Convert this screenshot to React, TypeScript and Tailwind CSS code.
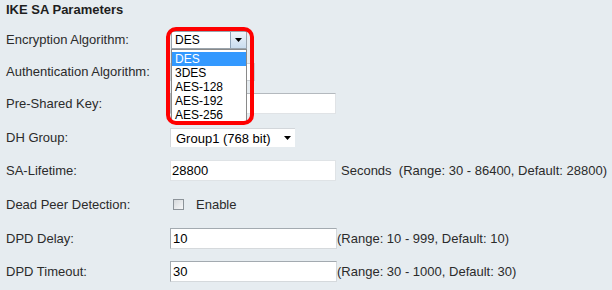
import type { ReactNode } from "react";

const ENC_OPTIONS = ["DES", "3DES", "AES-128", "AES-192", "AES-256"];

function Row({ label, h, children }: { label: string; h: string; children?: ReactNode }) {
  return (
    <div className={`flex items-center ${h}`}>
      <div className="w-[164px] shrink-0 text-[#2b2b2b]">{label}</div>
      <div className="flex items-center">{children}</div>
    </div>
  );
}

function Caret() {
  return (
    <svg width="7" height="4" viewBox="0 0 7 4">
      <path d="M0 0h7L3.5 4z" fill="#000" />
    </svg>
  );
}

export default function App() {
  return (
    <div
      className="w-[612px] h-[290px] overflow-hidden bg-[#e6ecf0] pl-[6px] text-[13px] leading-none"
      style={{ fontFamily: '"Liberation Sans", Arial, sans-serif' }}
    >
      {/* title */}
      <div className="h-[23px] pt-[2px] font-bold text-[#1e1e1e] leading-[16px]">IKE SA Parameters</div>

      <Row label="Encryption Algorithm:" h="h-[33px]">
        <div className="relative ml-[1px] w-[76px] h-[18px] z-10">
          <div className="flex h-full bg-white border border-[#9aa4ad]">
            <span className="flex-1 pl-[3px] text-[12px] leading-[16px] text-black">DES</span>
            <span className="flex w-[16px] items-center justify-center border-l border-[#8ea3b8] bg-gradient-to-b from-[#eef4fa] to-[#c9dcee]">
              <Caret />
            </span>
          </div>
          {/* open list */}
          <div className="absolute left-0 top-[18px] w-[76px] h-[73px] bg-white border border-[#8a8a8a] pt-[2px] text-[12px]">
            {ENC_OPTIONS.map((o, i) => (
              <div
                key={o}
                className={`h-[14px] pl-[3px] leading-[14px] ${i === 0 ? "bg-[#3399ff] text-white" : "text-black"}`}
              >
                {o}
              </div>
            ))}
          </div>
          {/* highlight ring */}
          <div className="absolute left-[-5px] top-[-4px] w-[88px] h-[98px] border-4 border-[#ff0000] rounded-[10px]" />
        </div>
      </Row>

      <Row label="Authentication Algorithm:" h="h-[31px]">
        <div className="w-[85px] h-[18px] bg-white border border-[#c9ced3]" />
      </Row>

      <Row label="Pre-Shared Key:" h="h-[33px]">
        <div className="w-[166px] h-[21px] bg-white border border-[#b4b9be] border-b-[#e0e3e6] border-r-[#e0e3e6]" />
      </Row>

      <Row label="DH Group:" h="h-[35px]">
        <div className="flex items-center w-[125px] h-[19px] bg-white border-t border-l border-[#d3d7db] pl-[5px] text-[13px] text-black">
          <span className="flex-1">Group1 (768 bit)</span>
          <span className="mr-[4px]">
            <Caret />
          </span>
        </div>
      </Row>

      <Row label="SA-Lifetime:" h="h-[31px]">
        <div className="flex items-center w-[166px] h-[21px] bg-white border border-[#dfe3e6] pl-[1px] text-black">28800</div>
        <span className="ml-[5px] whitespace-pre text-[#2b2b2b]">Seconds  (Range: 30 - 86400, Default: 28800)</span>
      </Row>

      <Row label="Dead Peer Detection:" h="h-[37px]">
        <div className="ml-[3px] w-[11px] h-[11px] border border-[#8c9399] bg-gradient-to-br from-[#d6d9dc] to-[#f6f7f8]" />
        <span className="ml-[12px] text-[#2b2b2b]">Enable</span>
      </Row>

      <Row label="DPD Delay:" h="h-[31px]">
        <div className="flex items-center w-[167px] h-[21px] bg-white border border-[#a3aab0] border-b-[#d5d9dc] border-r-[#d5d9dc] pl-[2px] text-black">10</div>
        <span className="text-[#2b2b2b]">(Range: 10 - 999, Default: 10)</span>
      </Row>

      <Row label="DPD Timeout:" h="h-[35px]">
        <div className="flex items-center w-[167px] h-[21px] bg-white border border-[#a3aab0] border-b-[#d5d9dc] border-r-[#d5d9dc] pl-[2px] text-black">30</div>
        <span className="text-[#2b2b2b]">(Range: 30 - 1000, Default: 30)</span>
      </Row>
    </div>
  );
}
